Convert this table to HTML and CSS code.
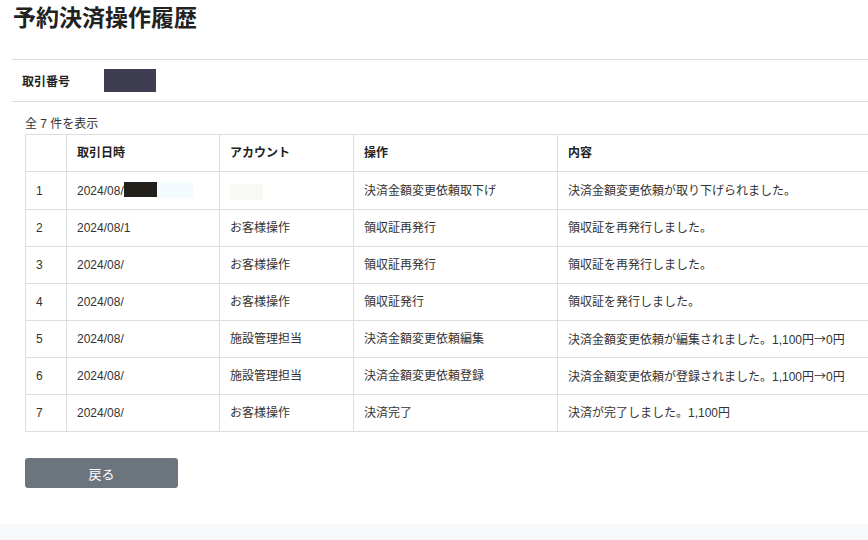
FILE: index.html
```html
<!DOCTYPE html>
<html lang="ja">
<head>
<meta charset="utf-8">
<title>予約決済操作履歴</title>
<link rel="stylesheet" href="styles.css">
</head>
<body>
<div class="page">
  <h1 class="title">予約決済操作履歴</h1>
  <div class="info">
    <span class="info-label">取引番号</span>
    <span class="redact redact-id"></span>
  </div>
  <div class="content">
    <p class="count">全 7 件を表示</p>
    <div class="table-wrap">
      <table class="history">
        <colgroup>
          <col class="c-no"><col class="c-date"><col class="c-acc"><col class="c-op"><col class="c-desc">
        </colgroup>
        <thead>
          <tr><th></th><th>取引日時</th><th>アカウント</th><th>操作</th><th>内容</th></tr>
        </thead>
        <tbody>
          <tr><td>1</td><td>2024/08/<span class="redact redact-dark"></span><span class="redact redact-light"></span></td><td><span class="redact redact-acc"></span></td><td>決済金額変更依頼取下げ</td><td>決済金額変更依頼が取り下げられました。</td></tr>
          <tr><td>2</td><td>2024/08/1</td><td>お客様操作</td><td>領収証再発行</td><td>領収証を再発行しました。</td></tr>
          <tr><td>3</td><td>2024/08/</td><td>お客様操作</td><td>領収証再発行</td><td>領収証を再発行しました。</td></tr>
          <tr><td>4</td><td>2024/08/</td><td>お客様操作</td><td>領収証発行</td><td>領収証を発行しました。</td></tr>
          <tr><td>5</td><td>2024/08/</td><td>施設管理担当</td><td>決済金額変更依頼編集</td><td>決済金額変更依頼が編集されました。1,100円<span class="arrow">→</span>0円</td></tr>
          <tr><td>6</td><td>2024/08/</td><td>施設管理担当</td><td>決済金額変更依頼登録</td><td>決済金額変更依頼が登録されました。1,100円<span class="arrow">→</span>0円</td></tr>
          <tr><td>7</td><td>2024/08/</td><td>お客様操作</td><td>決済完了</td><td>決済が完了しました。1,100円</td></tr>
        </tbody>
      </table>
    </div>
    <button class="btn-back" type="button">戻る</button>
  </div>
</div>
<footer class="footer"></footer>
</body>
</html>
```
FILE: styles.css
```css
html, body {
  margin: 0;
  padding: 0;
  background: #fff;
  overflow: hidden;
}
body {
  font-family: "Liberation Sans", "Noto Sans CJK JP", sans-serif;
  color: #333;
  font-size: 12px;
  width: 868px;
  height: 540px;
  display: flex;
  flex-direction: column;
}
.page {
  flex: 1;
  padding-left: 12px;
}
.title {
  margin: 0;
  padding: 4px 0 0 1px;
  font-size: 23px;
  line-height: 28px;
  font-weight: bold;
  color: #222;
  height: 59px;
  box-sizing: border-box;
}
.info {
  border-top: 1px solid #dcdcdc;
  border-bottom: 1px solid #dcdcdc;
  height: 41px;
  display: flex;
  align-items: center;
  padding-left: 10px;
}
.info-label {
  font-weight: bold;
  font-size: 12px;
  color: #222;
  width: 82px;
}
.redact {
  display: inline-block;
  vertical-align: middle;
}
.redact-id {
  width: 52px;
  height: 23px;
  background: #3f3d52;
}
.redact-dark {
  width: 33px;
  height: 15px;
  background: #231f1b;
  margin-top: -3px;
}
.redact-light {
  width: 36px;
  height: 16px;
  background: #f4fbff;
  margin-top: -3px;
}
.redact-acc {
  width: 33px;
  height: 16px;
  background: #f8f8f4;
  margin-top: 3px;
}
.content {
  padding-left: 13px;
}
.count {
  margin: 0;
  padding-top: 14px;
  height: 32px;
  box-sizing: border-box;
  line-height: 16px;
  font-size: 12px;
  color: #333;
}
.table-wrap {
  overflow: hidden;
}
.history {
  border-collapse: collapse;
  width: 860px;
  table-layout: fixed;
}
.c-no { width: 41px; }
.c-date { width: 153px; }
.c-acc { width: 134px; }
.c-op { width: 204px; }
.history th,
.history td {
  border: 1px solid #dedede;
  padding: 9px 10px;
  line-height: 16px;
  height: 18px;
  text-align: left;
  vertical-align: middle;
  font-size: 12px;
  color: #333;
  white-space: nowrap;
}
.history th {
  font-weight: bold;
  color: #222;
}
.arrow {
  font-family: "Noto Sans CJK JP", sans-serif;
}
.btn-back {
  margin-top: 26px;
  width: 153px;
  height: 30px;
  background: #6c757d;
  border: none;
  border-radius: 3px;
  color: #fff;
  font-family: "Liberation Sans", "Noto Sans CJK JP", sans-serif;
  font-size: 13px;
  padding: 0;
  display: block;
}
.footer {
  height: 16px;
  background: #f7f8fa;
}
```
